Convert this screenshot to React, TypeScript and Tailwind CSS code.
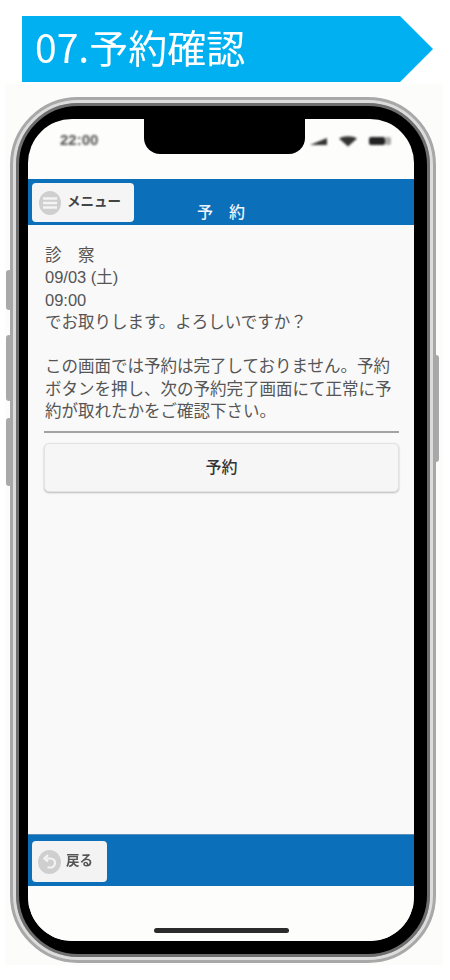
const jp = "font-['Liberation_Sans','Noto_Sans_CJK_JP',sans-serif]";

const MenuIcon = () => (
  <svg width="22" height="24" viewBox="0 0 22 24" className="shrink-0">
    <ellipse cx="11" cy="12" rx="11" ry="12" fill="#cfcfcf" />
    <path d="M4 7.5h14M4 12h14M4 16.5h14" stroke="#f4f4f4" strokeWidth="2.4" />
  </svg>
);

const BackIcon = () => (
  <svg width="23" height="24" viewBox="0 0 23 24" className="shrink-0">
    <ellipse cx="11.5" cy="12" rx="11.5" ry="12" fill="#cfcfcf" />
    <path
      d="M9 8.5h3.5a4.5 4.5 0 0 1 0 9H9.5M10 5L6.5 8.5 10 11.5"
      fill="none"
      stroke="#f4f4f4"
      strokeWidth="2.2"
    />
  </svg>
);

const StatusIcons = () => (
  <svg width="82" height="12" viewBox="0 0 82 12" className="blur-[0.8px]">
    <path d="M0 10L17 3v7z" fill="#333" />
    <path d="M29 3.5c5-3 13-3 18 0l-9 8z" fill="#333" />
    <rect x="59" y="2" width="16" height="8" rx="2" fill="#222" />
    <rect x="75" y="2" width="6" height="8" rx="2" fill="#aaa" />
  </svg>
);

const SideButton = ({ className }: { className: string }) => (
  <div className={`absolute w-[6px] rounded-sm bg-[#a9a9a9] blur-[0.6px] ${className}`} />
);

export default function App() {
  return (
    <div className={`w-[450px] h-[980px] bg-white overflow-hidden pt-[16px] ${jp}`}>
      <div className="ml-[22px] w-[411px] h-[66px] bg-[#00b0f0] [clip-path:polygon(0_0,378px_0,100%_50%,378px_100%,0_100%)] flex items-center pl-[13px] pb-[6px]">
        <span className="text-[39px] leading-none text-white font-['Noto_Sans_CJK_JP',sans-serif] blur-[0.3px]">07.予約確認</span>
      </div>

      <div className="relative ml-[5px] mt-[2px] w-[438px] h-[881px] bg-[#fcfcfb] pt-[13px] pl-[5px]">
        <SideButton className="left-[1px] top-[186px] h-[40px]" />
        <SideButton className="left-[1px] top-[251px] h-[66px]" />
        <SideButton className="left-[1px] top-[334px] h-[68px]" />
        <SideButton className="left-[428px] top-[271px] h-[107px]" />

        <div className="relative w-[426px] h-[866px] rounded-[68px] border-[3px] border-[#a8a8a8] bg-[#a8a8a8] blur-[0.4px]">
          <div className="h-full rounded-[65px] border-[3px] border-[#dcdcdc]">
            <div className="h-full rounded-[62px] border-[3px] border-[#6e6e6e] bg-black pt-[13px] pb-[11px] pl-[9px] pr-[13px]">
              <div className="relative h-[822px] rounded-[44px] overflow-hidden bg-[#fdfdfb] flex flex-col">
                {/* status bar */}
                <div className="h-[60px] shrink-0 flex items-start justify-between pt-[11px] pl-[32px] pr-[22px]">
                  <span className="text-[15px] leading-[20px] font-bold text-[#555] blur-[0.8px]">22:00</span>
                  <div className="pt-[5px]">
                    <StatusIcons />
                  </div>
                </div>

                {/* header */}
                <div className="relative h-[46px] shrink-0 bg-[#0b6fba] flex items-end justify-center pb-[2px]">
                  <span className="text-[16px] leading-[20px] font-medium text-[#eef4f9] whitespace-pre">予　約</span>
                  <div className="absolute left-[4px] top-[4px] w-[102px] h-[39px] rounded-[4px] bg-[#f5f5f5] flex items-center pl-[7px] gap-[6px]">
                    <MenuIcon />
                    <span className="text-[13.5px] font-bold text-[#444]">メニュー</span>
                  </div>
                </div>

                {/* content */}
                <div className="flex-1 bg-[#f9f9f9] pt-[19px] pl-[16px] pr-[15px] text-[16.5px] leading-[22.3px] text-[#555]">
                  <div className="pl-[1px]">
                    <p className="whitespace-pre">診　察</p>
                    <p>09/03 (土)</p>
                    <p>09:00</p>
                    <p>でお取りします。よろしいですか？</p>
                    <p className="mt-[22.3px]">この画面では予約は完了しておりません。予約ボタンを押し、次の予約完了画面にて正常に予約が取れたかをご確認下さい。</p>
                  </div>
                  <div className="mt-[9px] h-[2px] bg-[#a3a3a3]" />
                  <div className="mt-[10px] h-[49px] rounded-[5px] border border-[#e2e2e2] bg-[#f6f6f6] shadow-[0_1px_2px_rgba(0,0,0,0.25)] flex items-center justify-center">
                    <span className="text-[16px] font-medium text-[#333]">予約</span>
                  </div>
                </div>

                {/* footer */}
                <div className="h-[52px] shrink-0 bg-[#0b6fba] border-t border-[#5c8fb5] flex items-start pt-[6px] pl-[4px]">
                  <div className="w-[75px] h-[41px] rounded-[4px] bg-[#f3f3f3] flex items-center pl-[6px] gap-[5px]">
                    <BackIcon />
                    <span className="text-[13.5px] font-bold text-[#555]">戻る</span>
                  </div>
                </div>

                <div className="h-[55px] shrink-0 bg-[#fdfdfb]" />

                {/* home indicator */}
                <div className="absolute left-[126px] bottom-[8px] w-[135px] h-[5px] rounded-full bg-[#2b2b2b]" />
              </div>

              {/* notch */}
              <div className="absolute left-[131px] top-[17px] w-[161px] h-[37px] rounded-b-[16px] bg-black" />
            </div>
          </div>
        </div>
      </div>
    </div>
  );
}
